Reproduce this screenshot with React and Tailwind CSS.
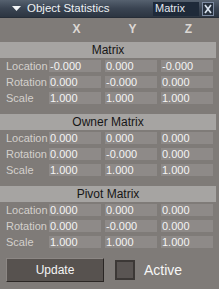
const sections = [
  {
    title: "Matrix",
    rows: [
      ["Location", "-0.000", "0.000", "-0.000"],
      ["Rotation", "0.000", "-0.000", "0.000"],
      ["Scale", "1.000", "1.000", "1.000"],
    ],
  },
  {
    title: "Owner Matrix",
    rows: [
      ["Location", "0.000", "0.000", "0.000"],
      ["Rotation", "0.000", "-0.000", "0.000"],
      ["Scale", "1.000", "1.000", "1.000"],
    ],
  },
  {
    title: "Pivot Matrix",
    rows: [
      ["Location", "0.000", "0.000", "0.000"],
      ["Rotation", "0.000", "-0.000", "0.000"],
      ["Scale", "1.000", "1.000", "1.000"],
    ],
  },
];

function Section({ title, rows, first }) {
  return (
    <div className={first ? "mt-[6px]" : "mt-[10px]"}>
      <div className="flex h-[16px] w-[216px] items-center justify-center bg-[#a6a4a2] text-[12px] leading-none text-[#161616]">
        {title}
      </div>
      <div className="mt-[2px] flex flex-col gap-[4px] pl-[6px]">
        {rows.map((row) => (
          <div key={row[0]} className="grid h-[12px] grid-cols-[39px_52px_52px_52px] gap-x-[4px]">
            <div className="flex items-center text-[11px] leading-none text-[#d4d0cc]">{row[0]}</div>
            {row.slice(1).map((v, i) => (
              <div key={i} className="flex items-center bg-[#8e8a88] pl-[1px] text-[11px] leading-none text-[#f4f4f4]">
                {v}
              </div>
            ))}
          </div>
        ))}
      </div>
    </div>
  );
}

export default function App() {
  return (
    <div className="h-[289px] w-[219px] overflow-hidden bg-[#7f7b78] font-['Liberation_Sans',Arial,sans-serif]">
      <div className="flex h-[18px] items-center border-b border-[#262d37] bg-gradient-to-b from-[#56616f] via-[#3a4452] to-[#2c3541]">
        <svg width="9" height="5" viewBox="0 0 9 5" className="ml-[12px]">
          <polygon points="0,0 9,0 4.5,5" fill="#f2f4f6" />
        </svg>
        <span className="ml-[6px] text-[11.5px] leading-none text-[#eef1f4]">Object Statistics</span>
        <div className="ml-auto flex h-[14px] w-[46px] items-center bg-[#1f2a39] pl-[2px] text-[11px] leading-none text-[#e4e9f0]">
          Matrix
        </div>
        <div className="ml-[3px] mr-[5px] flex h-[14px] w-[12px] items-center justify-center border border-[#7d8ba2] bg-[#27313e]">
          <svg width="8" height="10" viewBox="0 0 8 10">
            <path d="M1 1 L7 9 M7 1 L1 9" stroke="#d8e2ee" strokeWidth="1.7" />
          </svg>
        </div>
      </div>

      <div className="mt-[4px] grid h-[14px] grid-cols-[39px_52px_52px_52px] gap-x-[4px] pl-[6px] text-[12px] font-bold leading-none text-[#dcd8d4]">
        <div />
        <div className="flex items-center justify-center pl-[3px]">X</div>
        <div className="flex items-center justify-center pl-[3px]">Y</div>
        <div className="flex items-center justify-center pl-[3px]">Z</div>
      </div>

      {sections.map((s, i) => (
        <Section key={s.title} {...s} first={i === 0} />
      ))}

      <div className="mt-[10px] flex items-center pl-[6px]">
        <button className="flex h-[24px] w-[98px] items-center justify-center border border-t-[#8c8784] border-l-[#8c8784] border-b-[#2a2624] border-r-[#2a2624] bg-[#57524f] text-[12px] leading-none text-[#f4f4f4]">
          Update
        </button>
        <div className="ml-[11px] h-[20px] w-[20px] border-2 border-[#3c3836] bg-[#5a5553]" />
        <span className="ml-[9px] text-[14px] leading-none text-[#f6f6f6]">Active</span>
      </div>
    </div>
  );
}
